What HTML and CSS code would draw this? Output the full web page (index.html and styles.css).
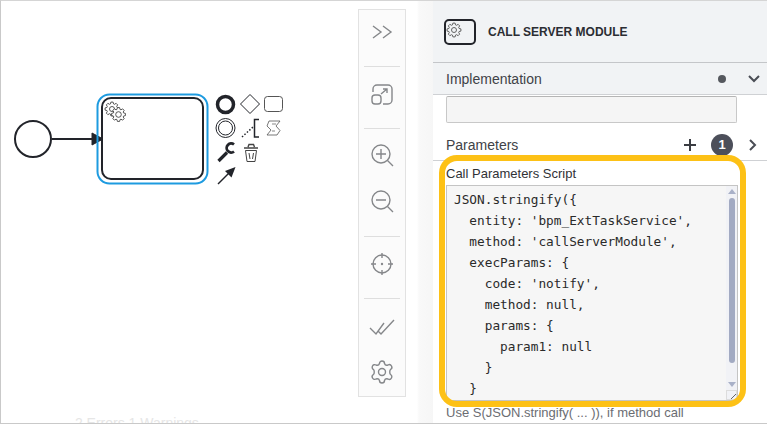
FILE: index.html
```html
<!DOCTYPE html>
<html lang="en">
<head>
<meta charset="UTF-8" />
<meta name="viewport" content="width=device-width, initial-scale=1" />
<title>Call Server Module</title>
<link rel="stylesheet" href="styles.css">
</head>
<body>

<div class="app">
  <div class="canvas">
    <svg class="diagram" width="357" height="422" viewBox="0 1 357 422" fill="none" stroke="#22242a">
      <defs>
        <polygon id="gear" points="5.07,-1.55 6.91,-1.1 6.91,1.1 5.07,1.55 4.68,2.49 5.66,4.11 4.11,5.66 2.49,4.68 1.55,5.07 1.1,6.91 -1.1,6.91 -1.55,5.07 -2.49,4.68 -4.11,5.66 -5.66,4.11 -4.68,2.49 -5.07,1.55 -6.91,1.1 -6.91,-1.1 -5.07,-1.55 -4.68,-2.49 -5.66,-4.11 -4.11,-5.66 -2.49,-4.68 -1.55,-5.07 -1.1,-6.91 1.1,-6.91 1.55,-5.07 2.49,-4.68 4.11,-5.66 5.66,-4.11 4.68,-2.49"/>
      </defs>
      <circle cx="32" cy="139" r="18" stroke-width="2"/>
      <path d="M51 139H92" stroke-width="2"/>
      <path d="M102 139L91 133V145Z" fill="#22242a" stroke-width="1"/>
      <rect x="96.500" y="94.500" width="110" height="89" rx="12" stroke="#1e9be0" stroke-width="2"/>
      <rect x="101" y="98" width="101" height="81" rx="9" stroke-width="2"/>
      <g stroke="#444" stroke-width="0.900">
        <use href="#gear" x="111" y="109"/>
        <circle cx="111" cy="109" r="2.500"/>
        <use href="#gear" x="117.500" y="114.500" fill="#fff"/>
        <circle cx="117.500" cy="114.500" r="2.800"/>
      </g>
      <circle cx="224.500" cy="104.500" r="8" stroke-width="3.500"/>
      <path d="M249 94.500L258.500 104L249 113.500L239.500 104Z" stroke-width="1"/>
      <rect x="263.500" y="96.500" width="18" height="15" rx="3" stroke="#555" stroke-width="1"/>
      <circle cx="224.500" cy="128" r="9.500" stroke-width="1"/>
      <circle cx="224.500" cy="128" r="7" stroke-width="1"/>
      <path d="M241 137L252 127" stroke-width="1.500" stroke-dasharray="1.500 1.800"/>
      <path d="M258 119.500H253.500V137H258" stroke-width="1.500"/>
      <path d="M268 121H279L275 126L279 130.500L276 135H266L270 130L266 126Z" stroke="#555" stroke-width="0.800"/>
      <path d="M271 124H275M271 131H274" stroke="#555" stroke-width="0.700"/>
      <path d="M217.500 161L226 152.500" stroke-width="3.200"/>
      <path d="M233 144.500A4.500 4.500 0 1 0 233 151.500" stroke-width="2.800"/>
      <path d="M243 148H257M247 147L248 144.500H252.500L253.500 147" stroke="#444" stroke-width="1.400"/>
      <path d="M244.500 150.500H255.500L254 161.500H246Z" stroke="#444" stroke-width="1"/>
      <path d="M248 153L249 159M252.500 153L251.500 159" stroke="#444" stroke-width="1"/>
      <path d="M217 184L228 173" stroke-width="1.500"/>
      <path d="M234.500 167L230.500 177.500L224 171Z" fill="#22242a" stroke="none"/>
    </svg>
    <div class="problems">⌄ 2 Errors 1 Warnings</div>
  </div>

  <div class="toolbar">
    <div class="tool-group">
      <svg class="tool" width="24" height="24" viewBox="0 0 24 24"><path d="M3 6L11 12L3 18M13 6L21 12L13 18"/></svg>
    </div>
    <div class="tool-group">
      <svg class="tool" width="24" height="24" viewBox="0 0 24 24"><path d="M3 9V6A4 4 0 0 1 7 2H18A4 4 0 0 1 22 6V17A4 4 0 0 1 18 21H13"/><rect x="2" y="12" width="9" height="9" rx="3"/><path d="M11 11L17 6M13 6H17V10"/></svg>
    </div>
    <div class="tool-group">
      <svg class="tool" width="24" height="24" viewBox="0 0 24 24"><circle cx="11" cy="11" r="9"/><path d="M17.500 17.500L23 23M6 11H16M11 6V16"/></svg>
      <svg class="tool" width="24" height="24" viewBox="0 0 24 24"><circle cx="11" cy="11" r="9"/><path d="M17.500 17.500L23 23M6 11H16"/></svg>
    </div>
    <div class="tool-group">
      <svg class="tool" width="24" height="24" viewBox="0 0 24 24"><circle cx="12" cy="12" r="9"/><path d="M12 1V6M12 18V23M1 12H6M18 12H23"/><circle cx="12" cy="12" r="0.500"/></svg>
    </div>
    <div class="tool-group">
      <svg class="tool" width="26" height="24" viewBox="0 0 26 24"><path d="M1 13L7 19L15 8M9 16L12 19L25 5"/></svg>
      <svg class="tool" width="24" height="24" viewBox="0 0 24 24"><circle cx="12" cy="12" r="3.500"/><path d="M9.500 3.500A2.500 2.500 0 0 1 14.500 3.500C15 5 16.500 5.500 18 5A2.500 2.500 0 0 1 20.500 9.500C19.500 10.500 19.500 13.500 20.500 14.500A2.500 2.500 0 0 1 18 19C16.500 18.500 15 19 14.500 20.500A2.500 2.500 0 0 1 9.500 20.500C9 19 7.500 18.500 6 19A2.500 2.500 0 0 1 3.500 14.500C4.500 13.500 4.500 10.500 3.500 9.500A2.500 2.500 0 0 1 6 5C7.500 5.500 9 5 9.500 3.500Z"/></svg>
    </div>
  </div>

  <div class="gutter"></div>

  <div class="panel">
    <div class="panel-header">
      <svg width="32" height="26" viewBox="0 0 32 26" fill="none" stroke="#22242a">
        <rect x="1" y="1" width="30" height="24" rx="4" stroke-width="2"/>
        <g stroke="#555" stroke-width="0.900">
          <use href="#gear" x="9" y="10" transform="translate(1 1)" />
          <circle cx="10" cy="11" r="2.500"/>
        </g>
      </svg>
      <span class="panel-title">CALL SERVER MODULE</span>
    </div>

    <div class="section-row section-open">
      <span class="section-name">Implementation</span>
      <span class="dot"></span>
      <svg class="chevron" width="12" height="8" viewBox="0 0 12 8"><path d="M1 1L6 6L11 1"/></svg>
    </div>

    <div class="text-input"></div>

    <div class="section-row params-row">
      <span class="section-name">Parameters</span>
      <svg class="plus" width="12" height="12" viewBox="0 0 12 12"><path d="M6 0V12M0 6H12"/></svg>
      <span class="count">1</span>
      <svg class="chevron" width="8" height="12" viewBox="0 0 8 12"><path d="M1 1L6 6L1 11"/></svg>
    </div>

    <div class="script-field">
      <label class="field-label">Call Parameters Script</label>
      <div class="code-box">
        <pre class="code">JSON.stringify({
  entity: 'bpm_ExtTaskService',
  method: 'callServerModule',
  execParams: {
    code: 'notify',
    method: null,
    params: {
      param1: null
    }
  }</pre>
        <div class="scrollbar">
          <span class="arrow-up"></span>
          <span class="thumb"></span>
          <span class="arrow-down"></span>
          <span class="resize-handle"></span>
        </div>
      </div>
    </div>
    <div class="highlight"></div>

    <p class="help">Use S(JSON.stringify( ... )), if method call</p>
  </div>
</div>

</body>
</html>
```

FILE: styles.css
```css
* {
  box-sizing: border-box;
}
html, body {
  height: 100%;
}
body {
  margin: 0;
  overflow: hidden;
  background: #fff;
  font-family: 'Liberation Sans', Arial, sans-serif;
}
.app {
  display: flex;
  height: 424px;
  border-top: 1px solid #d5d5d5;
  border-bottom: 1px solid #c9c9c9;
  border-left: 1px solid #c9c9c9;
  overflow: hidden;
}
.canvas {
  position: relative;
  width: 357px;
  flex: none;
}
.diagram {
  display: block;
}
.problems {
  position: absolute;
  left: 58px;
  top: 414px;
  font-size: 14px;
  color: #e6e6e6;
}
.toolbar {
  width: 48px;
  height: 388px;
  margin-top: 8px;
  flex: none;
  display: flex;
  flex-direction: column;
  padding: 0 5px;
  background: #fbfbfb;
  border: 1px solid #e2e2e2;
}
.tool-group {
  display: flex;
  flex-direction: column;
  align-items: center;
  border-bottom: 1px solid #dedede;
}
.tool-group:first-child {
  height: 57px;
  padding-top: 10px;
}
.tool-group:nth-child(2) {
  height: 62px;
  padding-top: 16px;
}
.tool-group:nth-child(3) {
  height: 108px;
  padding-top: 14px;
  gap: 22px;
}
.tool-group:nth-child(4) {
  height: 62px;
  padding-top: 15px;
}
.tool-group:last-child {
  border-bottom: none;
  padding-top: 16px;
  gap: 21px;
}
.tool {
  fill: none;
  stroke: #85878a;
  stroke-width: 1.400;
  overflow: visible;
}
.gutter {
  width: 27px;
  flex: none;
  background: linear-gradient(90deg, #fff 0, #fff 11px, #f9f9f9 13px, #f6f6f6 100%);
}
.panel {
  position: relative;
  flex: 1;
  min-width: 0;
  background: #fff;
  margin-top: -1px;
  border-top: 1px solid #d5d5d5;
}
.panel-header {
  display: flex;
  align-items: center;
  gap: 12px;
  height: 62px;
  padding: 0 11px;
  background: #f1f3f5;
  border-bottom: 1px solid #c4c6c9;
}
.panel-title {
  font-size: 12px;
  font-weight: bold;
  color: #2b2d33;
}
.section-row {
  display: flex;
  align-items: center;
  padding: 0 7px 0 13px;
  font-size: 14px;
  color: #404247;
  border-bottom: 1px solid #cfd1d4;
}
.section-name {
  flex: 1;
}
.section-open {
  height: 32px;
  background: #f1f3f5;
}
.dot {
  width: 8px;
  height: 8px;
  border-radius: 50%;
  background: #55585e;
  margin-right: 22px;
}
.chevron {
  fill: none;
  stroke: #4a4d55;
  stroke-width: 2;
}
.text-input {
  height: 27px;
  width: 291px;
  margin: 1px 0 0 13px;
  background: #f5f5f5;
  border: 1px solid #c8c8c8;
  border-top-color: #b5b5b5;
  border-radius: 2px;
}
.params-row {
  height: 38px;
  padding-top: 7px;
  padding-right: 10px;
}
.plus {
  fill: none;
  stroke: #3a3c42;
  stroke-width: 2;
  margin-right: 15px;
}
.count {
  width: 22px;
  height: 22px;
  margin-right: 16px;
  border-radius: 50%;
  background: #4c4f5a;
  color: #fff;
  font-size: 13px;
  font-weight: bold;
  line-height: 22px;
  text-align: center;
}
.script-field {
  padding: 5px 0 0 13px;
}
.field-label {
  display: block;
  height: 19px;
  font-size: 13px;
  color: #303236;
}
.code-box {
  display: flex;
  width: 292px;
  height: 216px;
  background: #f6f6f6;
  border: 1px solid #c4c4c4;
  overflow: hidden;
}
.code {
  flex: 1;
  margin: 0;
  padding: 3px 0 0 7px;
  font-family: 'DejaVu Sans Mono', monospace;
  font-size: 12.750px;
  line-height: 21px;
  color: #2a2a2a;
}
.scrollbar {
  display: flex;
  flex-direction: column;
  align-items: center;
  width: 11px;
  padding-top: 3px;
  background: #f1f2f6;
}
.arrow-up,
.arrow-down {
  width: 0;
  height: 0;
  border-left: 4px solid transparent;
  border-right: 4px solid transparent;
}
.arrow-up {
  border-bottom: 5px solid #a9b1c8;
}
.arrow-down {
  margin-top: 19px;
  border-top: 5px solid #a9b1c8;
}
.thumb {
  width: 6px;
  height: 165px;
  margin-top: 4px;
  border-radius: 3px;
  background: #a2aac2;
}
.resize-handle {
  width: 11px;
  height: 10px;
  margin-top: auto;
  border: 1px solid #dcdcdc;
  background: linear-gradient(135deg, transparent 70%, #666 70%, #666 76%, transparent 76%);
}
.highlight {
  position: absolute;
  left: 6px;
  top: 154px;
  width: 307px;
  height: 252px;
  border: 6px solid #fdc116;
  border-radius: 18px;
  pointer-events: none;
}
.help {
  margin: 4px 0 0 13px;
  font-size: 13px;
  color: #6b6d72;
}
```
